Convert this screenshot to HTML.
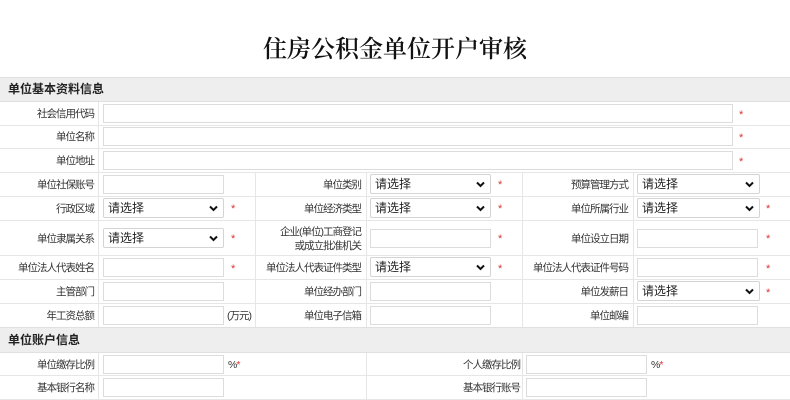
<!DOCTYPE html>
<html><head><meta charset="utf-8"><style>
*{margin:0;padding:0;box-sizing:border-box}
body{width:790px;height:400px;background:#fff;position:relative;overflow:hidden;font-family:"Liberation Sans","Noto Sans CJK SC",sans-serif;font-size:10.5px;color:#333}
div{position:absolute}
.t{left:0;width:790px;top:30px;text-align:center;font-family:"Noto Serif CJK SC","Liberation Serif",serif;font-size:24px;color:#111;line-height:34px;font-weight:600}
.h{left:0;width:790px;background:#eeeeee;font-weight:bold;font-size:12px;color:#222;padding-left:8px;border-top:1px solid #e0e0e0;border-bottom:1px solid #e0e0e0}
.hl{left:0;width:790px;height:1px;background:#e6e6e6}
.vl{width:1px;background:#e6e6e6}
.l{text-align:right;white-space:nowrap;line-height:14px;letter-spacing:-1px}
.i{border:1px solid #dcdcdc;background:#fff;height:19px}
.s{border:1px solid #d4d4d4;background:#fff;height:20px;border-radius:2px;padding-left:4px;line-height:18px;font-size:12px;color:#222}
.s svg{position:absolute;right:5px;top:6px}
.r{color:#d33;font-size:11px;line-height:14px}
</style></head><body>
<div class="t">住房公积金单位开户审核</div>
<div class="h" style="top:77px;height:25px;line-height:23px">单位基本资料信息</div>

<div class="hl" style="top:125px"></div>
<div class="hl" style="top:148px"></div>
<div class="hl" style="top:172px"></div>
<div class="hl" style="top:196px"></div>
<div class="hl" style="top:220px"></div>
<div class="hl" style="top:255px"></div>
<div class="hl" style="top:279px"></div>
<div class="hl" style="top:303px"></div>
<div class="hl" style="top:375px"></div>
<div class="hl" style="top:399px"></div>

<div class="vl" style="left:98px;top:102px;height:225px"></div>
<div class="vl" style="left:255px;top:172px;height:155px"></div>
<div class="vl" style="left:366px;top:172px;height:155px"></div>
<div class="vl" style="left:522px;top:172px;height:155px"></div>
<div class="vl" style="left:633px;top:172px;height:155px"></div>
<div class="vl" style="left:98px;top:353px;height:47px"></div>
<div class="vl" style="left:366px;top:353px;height:47px"></div>
<div class="vl" style="left:522px;top:353px;height:47px"></div>

<div class="l" style="right:696px;top:107px">社会信用代码</div>
<div class="i" style="left:103px;top:104px;width:630px"></div><div class="r" style="left:739px;top:108px">*</div>
<div class="l" style="right:696px;top:130px">单位名称</div>
<div class="i" style="left:103px;top:127px;width:630px"></div><div class="r" style="left:739px;top:131px">*</div>
<div class="l" style="right:696px;top:154px">单位地址</div>
<div class="i" style="left:103px;top:151px;width:630px"></div><div class="r" style="left:739px;top:155px">*</div>

<div class="l" style="right:696px;top:178px">单位社保账号</div>
<div class="i" style="left:103px;top:175px;width:121px"></div>
<div class="l" style="right:429px;top:178px">单位类别</div>
<div class="s" style="left:370px;top:174px;width:121px">请选择<svg width="9" height="7"><path d="M1 1.5L4.5 5 8 1.5" stroke="#111" stroke-width="2" fill="none"/></svg></div><div class="r" style="left:498px;top:178px">*</div>
<div class="l" style="right:162px;top:178px">预算管理方式</div>
<div class="s" style="left:637px;top:174px;width:123px">请选择<svg width="9" height="7"><path d="M1 1.5L4.5 5 8 1.5" stroke="#111" stroke-width="2" fill="none"/></svg></div>

<div class="l" style="right:696px;top:202px">行政区域</div>
<div class="s" style="left:103px;top:198px;width:121px">请选择<svg width="9" height="7"><path d="M1 1.5L4.5 5 8 1.5" stroke="#111" stroke-width="2" fill="none"/></svg></div><div class="r" style="left:231px;top:202px">*</div>
<div class="l" style="right:429px;top:202px">单位经济类型</div>
<div class="s" style="left:370px;top:198px;width:121px">请选择<svg width="9" height="7"><path d="M1 1.5L4.5 5 8 1.5" stroke="#111" stroke-width="2" fill="none"/></svg></div><div class="r" style="left:498px;top:202px">*</div>
<div class="l" style="right:162px;top:202px">单位所属行业</div>
<div class="s" style="left:637px;top:198px;width:123px">请选择<svg width="9" height="7"><path d="M1 1.5L4.5 5 8 1.5" stroke="#111" stroke-width="2" fill="none"/></svg></div><div class="r" style="left:766px;top:202px">*</div>

<div class="l" style="right:696px;top:232px">单位隶属关系</div>
<div class="s" style="left:103px;top:228px;width:121px">请选择<svg width="9" height="7"><path d="M1 1.5L4.5 5 8 1.5" stroke="#111" stroke-width="2" fill="none"/></svg></div><div class="r" style="left:231px;top:232px">*</div>
<div class="l" style="right:429px;top:225px">企业(单位)工商登记<br>或成立批准机关</div>
<div class="i" style="left:370px;top:229px;width:121px"></div><div class="r" style="left:498px;top:232px">*</div>
<div class="l" style="right:162px;top:232px">单位设立日期</div>
<div class="i" style="left:637px;top:229px;width:121px"></div><div class="r" style="left:766px;top:232px">*</div>

<div class="l" style="right:696px;top:261px">单位法人代表姓名</div>
<div class="i" style="left:103px;top:258px;width:121px"></div><div class="r" style="left:231px;top:262px">*</div>
<div class="l" style="right:429px;top:261px">单位法人代表证件类型</div>
<div class="s" style="left:370px;top:257px;width:121px">请选择<svg width="9" height="7"><path d="M1 1.5L4.5 5 8 1.5" stroke="#111" stroke-width="2" fill="none"/></svg></div><div class="r" style="left:498px;top:262px">*</div>
<div class="l" style="right:162px;top:261px">单位法人代表证件号码</div>
<div class="i" style="left:637px;top:258px;width:121px"></div><div class="r" style="left:766px;top:262px">*</div>

<div class="l" style="right:696px;top:285px">主管部门</div>
<div class="i" style="left:103px;top:282px;width:121px"></div>
<div class="l" style="right:429px;top:285px">单位经办部门</div>
<div class="i" style="left:370px;top:282px;width:121px"></div>
<div class="l" style="right:162px;top:285px">单位发薪日</div>
<div class="s" style="left:637px;top:281px;width:123px">请选择<svg width="9" height="7"><path d="M1 1.5L4.5 5 8 1.5" stroke="#111" stroke-width="2" fill="none"/></svg></div><div class="r" style="left:766px;top:286px">*</div>

<div class="l" style="right:696px;top:309px">年工资总额</div>
<div class="i" style="left:103px;top:306px;width:121px"></div>
<div class="l" style="left:227px;top:309px">(万元)</div>
<div class="l" style="right:429px;top:309px">单位电子信箱</div>
<div class="i" style="left:370px;top:306px;width:121px"></div>
<div class="l" style="right:162px;top:309px">单位邮编</div>
<div class="i" style="left:637px;top:306px;width:121px"></div>

<div class="h" style="top:327px;height:26px;line-height:24px">单位账户信息</div>

<div class="l" style="right:696px;top:358px">单位缴存比例</div>
<div class="i" style="left:103px;top:355px;width:121px"></div>
<div class="l" style="left:228px;top:358px">%<span style="color:#d33">*</span></div>
<div class="l" style="right:270px;top:358px">个人缴存比例</div>
<div class="i" style="left:526px;top:355px;width:121px"></div>
<div class="l" style="left:651px;top:358px">%<span style="color:#d33">*</span></div>

<div class="l" style="right:696px;top:381px">基本银行名称</div>
<div class="i" style="left:103px;top:378px;width:121px"></div>
<div class="l" style="right:270px;top:381px">基本银行账号</div>
<div class="i" style="left:526px;top:378px;width:121px"></div>
</body></html>
